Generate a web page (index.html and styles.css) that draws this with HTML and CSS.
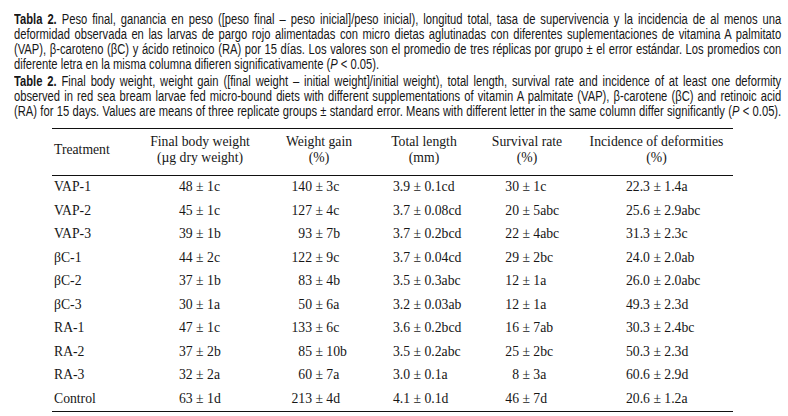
FILE: index.html
```html
<!DOCTYPE html>
<html lang="es">
<head>
<meta charset="utf-8">
<link rel="stylesheet" href="styles.css">
</head>
<body>
<div class="caption-wrap">
<div class="caption">
  <p class="para">
    <span class="ln"><b>Tabla 2.</b> Peso final, ganancia en peso ([peso final – peso inicial]/peso inicial), longitud total, tasa de supervivencia y la incidencia de al menos una</span>
    <span class="ln">deformidad observada en las larvas de pargo rojo alimentadas con micro dietas aglutinadas con diferentes suplementaciones de vitamina A palmitato</span>
    <span class="ln">(VAP), β-caroteno (βC) y ácido retinoico (RA) por 15 días. Los valores son el promedio de tres réplicas por grupo ± el error estándar. Los promedios con</span>
    <span class="ln last">diferente letra en la misma columna difieren significativamente (<i>P</i> &lt; 0.05).</span>
  </p>
  <p class="para">
    <span class="ln"><b>Table 2.</b> Final body weight, weight gain ([final weight – initial weight]/initial weight), total length, survival rate and incidence of at least one deformity</span>
    <span class="ln">observed in red sea bream larvae fed micro-bound diets with different supplementations of vitamin A palmitate (VAP), β-carotene (βC) and retinoic acid</span>
    <span class="ln">(RA) for 15 days. Values are means of three replicate groups ± standard error. Means with different letter in the same column differ significantly (<i>P</i> &lt; 0.05).</span>
  </p>
</div>
</div>
<table class="data">
  <colgroup>
    <col class="c1"><col class="c2"><col class="c3"><col class="c4"><col class="c5"><col class="c6">
  </colgroup>
  <thead>
    <tr>
      <th class="h1">Treatment</th>
      <th class="h2">Final body weight<br>(µg dry weight)</th>
      <th class="h3">Weight gain<br>(%)</th>
      <th class="h4">Total length<br>(mm)</th>
      <th class="h5">Survival rate<br>(%)</th>
      <th class="h6">Incidence of deformities<br>(%)</th>
    </tr>
  </thead>
  <tbody>
    <tr><td class="t">VAP-1</td><td class="v2">48 ± 1c</td><td class="v3"><span class="n3">140</span> ± 3c</td><td class="v4">3.9 ± 0.1cd</td><td class="v5"><span class="n5">30</span> ± 1c</td><td class="v6">22.3 ± 1.4a</td></tr>
    <tr><td class="t">VAP-2</td><td class="v2">45 ± 1c</td><td class="v3"><span class="n3">127</span> ± 4c</td><td class="v4">3.7 ± 0.08cd</td><td class="v5"><span class="n5">20</span> ± 5abc</td><td class="v6">25.6 ± 2.9abc</td></tr>
    <tr><td class="t">VAP-3</td><td class="v2">39 ± 1b</td><td class="v3"><span class="n3">93</span> ± 7b</td><td class="v4">3.7 ± 0.2bcd</td><td class="v5"><span class="n5">22</span> ± 4abc</td><td class="v6">31.3 ± 2.3c</td></tr>
    <tr><td class="t">βC-1</td><td class="v2">44 ± 2c</td><td class="v3"><span class="n3">122</span> ± 9c</td><td class="v4">3.7 ± 0.04cd</td><td class="v5"><span class="n5">29</span> ± 2bc</td><td class="v6">24.0 ± 2.0ab</td></tr>
    <tr><td class="t">βC-2</td><td class="v2">37 ± 1b</td><td class="v3"><span class="n3">83</span> ± 4b</td><td class="v4">3.5 ± 0.3abc</td><td class="v5"><span class="n5">12</span> ± 1a</td><td class="v6">26.0 ± 2.0abc</td></tr>
    <tr><td class="t">βC-3</td><td class="v2">30 ± 1a</td><td class="v3"><span class="n3">50</span> ± 6a</td><td class="v4">3.2 ± 0.03ab</td><td class="v5"><span class="n5">12</span> ± 1a</td><td class="v6">49.3 ± 2.3d</td></tr>
    <tr><td class="t">RA-1</td><td class="v2">47 ± 1c</td><td class="v3"><span class="n3">133</span> ± 6c</td><td class="v4">3.6 ± 0.2bcd</td><td class="v5"><span class="n5">16</span> ± 7ab</td><td class="v6">30.3 ± 2.4bc</td></tr>
    <tr><td class="t">RA-2</td><td class="v2">37 ± 2b</td><td class="v3"><span class="n3">85</span> ± 10b</td><td class="v4">3.5 ± 0.2abc</td><td class="v5"><span class="n5">25</span> ± 2bc</td><td class="v6">50.3 ± 2.3d</td></tr>
    <tr><td class="t">RA-3</td><td class="v2">32 ± 2a</td><td class="v3"><span class="n3">60</span> ± 7a</td><td class="v4">3.0 ± 0.1a</td><td class="v5"><span class="n5">8</span> ± 3a</td><td class="v6">60.6 ± 2.9d</td></tr>
    <tr><td class="t">Control</td><td class="v2">63 ± 1d</td><td class="v3"><span class="n3">213</span> ± 4d</td><td class="v4">4.1 ± 0.1d</td><td class="v5"><span class="n5">46</span> ± 7d</td><td class="v6">20.6 ± 1.2a</td></tr>
  </tbody>
</table>
</body>
</html>
```
FILE: styles.css
```css
html, body {
  margin: 0;
  padding: 0;
  background: #ffffff;
}

body {
  color: #161616;
  overflow: hidden;
}

.caption-wrap {
  height: 107px;
  padding: 12px 0 0 14px;
  overflow: visible;
}

.caption {
  width: 959px;
  transform: scaleX(0.8);
  transform-origin: 0 0;
  font-family: "Liberation Sans", Arial, sans-serif;
  font-size: 14px;
  line-height: 15px;
}

.para {
  margin: 0 0 2px 0;
}

.ln {
  display: block;
  white-space: nowrap;
  text-align: justify;
  text-align-last: justify;
}

.ln.last {
  text-align-last: left;
}

.data {
  margin: 9px 0 0 52px;
  width: 681px;
  table-layout: fixed;
  border-collapse: collapse;
  border-top: 1.5px solid #111;
  border-bottom: 1.5px solid #111;
  font-family: "Liberation Serif", "Times New Roman", serif;
  font-size: 13.7px;
}

.c1 { width: 98px; }
.c2 { width: 100px; }
.c3 { width: 138px; }
.c4 { width: 72px; }
.c5 { width: 120px; }
.c6 { width: 153px; }

.data th {
  font-weight: normal;
  line-height: 16px;
  padding: 5px 0 9px;
  text-align: center;
  border-bottom: 1.5px solid #111;
  white-space: nowrap;
}

.data th.h1 {
  text-align: left;
  padding-left: 2px;
}

.data th.h5 {
  padding-left: 14px;
}

.data td {
  line-height: 16px;
  padding: 3px 0 4.5px;
  white-space: nowrap;
  text-align: left;
}

.data td.t { padding-left: 2px; }
.data td.v2 { padding-left: 29px; }
.data td.v3 { padding-left: 41px; }
.data td.v4 { padding-left: 5px; }
.data td.v5 { padding-left: 45px; }
.data td.v6 { padding-left: 46px; }

.n3 {
  display: inline-block;
  width: 21px;
  text-align: right;
}

.n5 {
  display: inline-block;
  width: 14px;
  text-align: right;
}
```
